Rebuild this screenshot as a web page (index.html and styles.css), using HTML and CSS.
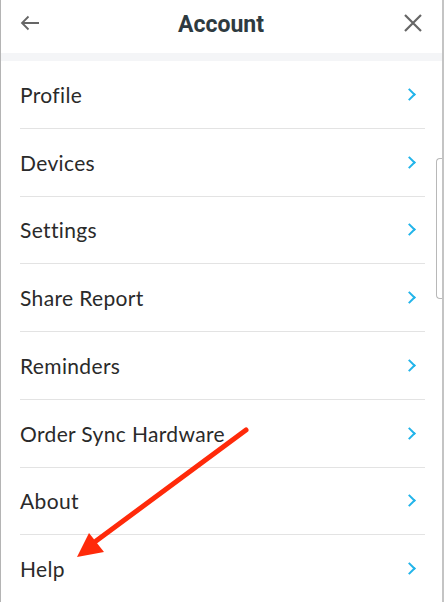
FILE: index.html
```html
<!DOCTYPE html>
<html lang="en">
<head>
    <meta charset="UTF-8">
    <meta name="viewport" content="width=device-width, initial-scale=1.0">
    <title>Account</title>
    <link rel="stylesheet" href="styles.css">
</head>
<body>

    <div class="sheet">
        <header class="top-bar">
            <button class="icon-btn" aria-label="Back">
                <svg width="20" height="16" viewBox="0 0 20 16">
                    <path d="M19 8H2M8.5 1.5L2 8l6.5 6.5" fill="none" stroke="#666" stroke-width="1.8"/>
                </svg>
            </button>
            <h1>Account</h1>
            <button class="icon-btn" aria-label="Close">
                <svg width="18" height="18" viewBox="0 0 18 18">
                    <path d="M1 1l16 16M17 1L1 17" fill="none" stroke="#666" stroke-width="2.2"/>
                </svg>
            </button>
        </header>

        <div class="gap-band"></div>

        <ul class="menu">
            <li class="menu-item"><span>Profile</span><i class="chev"></i></li>
            <li class="menu-item"><span>Devices</span><i class="chev"></i></li>
            <li class="menu-item"><span>Settings</span><i class="chev"></i></li>
            <li class="menu-item"><span>Share Report</span><i class="chev"></i></li>
            <li class="menu-item"><span>Reminders</span><i class="chev"></i></li>
            <li class="menu-item"><span>Order Sync Hardware</span><i class="chev"></i></li>
            <li class="menu-item"><span>About</span><i class="chev"></i></li>
            <li class="menu-item"><span>Help</span><i class="chev"></i></li>
        </ul>

        <!-- barra de scroll del fondo -->
        <div class="scroll-thumb"></div>

        <!-- flecha roja de anotación -->
        <svg class="annotation" width="444" height="602" viewBox="0 0 444 602">
            <line x1="246" y1="430" x2="96" y2="541" stroke="#ff2a0a" stroke-width="5" stroke-linecap="round"/>
            <polygon points="77,557 89,533 104,552" fill="#ff2a0a"/>
        </svg>
    </div>

</body>
</html>
```

FILE: styles.css
```css
body {
    margin: 0;
    background-color: #fff;
    font-family: "Lato", "Liberation Sans", sans-serif;
}
.sheet {
    position: relative;
    width: 444px;
    height: 602px;
    overflow: hidden;
    box-sizing: border-box;
    border-left: 1px solid #b4b4b4;
    border-right: 2px solid #c4c4c4;
}
.top-bar {
    display: flex;
    align-items: center;
    justify-content: space-between;
    height: 53px;
    padding: 0 20px 7px 19px;
    box-sizing: border-box;
}
.top-bar h1 {
    margin: 0;
    padding-top: 3px;
    font-family: "Roboto", "Liberation Sans", sans-serif;
    font-size: 23px;
    font-weight: bold;
    color: #2e3a40;
}
.icon-btn {
    display: flex;
    align-items: center;
    background: none;
    border: none;
    padding: 0;
    width: 20px;
    height: 20px;
}
.icon-btn:last-child {
    justify-content: flex-end;
}
.gap-band {
    height: 8px;
    background-color: #f4f5f7;
}
.menu {
    list-style: none;
    margin: 0;
    padding: 0 17px 0 19px;
}
.menu-item {
    display: flex;
    align-items: center;
    justify-content: space-between;
    height: 66.75px;
    border-bottom: 1px solid #e3e3e3;
    font-size: 21px;
    letter-spacing: 0.35px;
    color: #2a2a2a;
    padding-right: 11px;
}
.chev {
    width: 7px;
    height: 7px;
    border-top: 2.5px solid #22b4ea;
    border-right: 2.5px solid #22b4ea;
    transform: rotate(45deg);
}
.scroll-thumb {
    position: absolute;
    top: 158px;
    right: 0;
    width: 5px;
    height: 139px;
    border: 1px solid #b8b8b8;
    border-right: none;
    border-radius: 4px 0 0 4px;
}
.annotation {
    position: absolute;
    top: 0;
    left: -1px;
    pointer-events: none;
}
```
